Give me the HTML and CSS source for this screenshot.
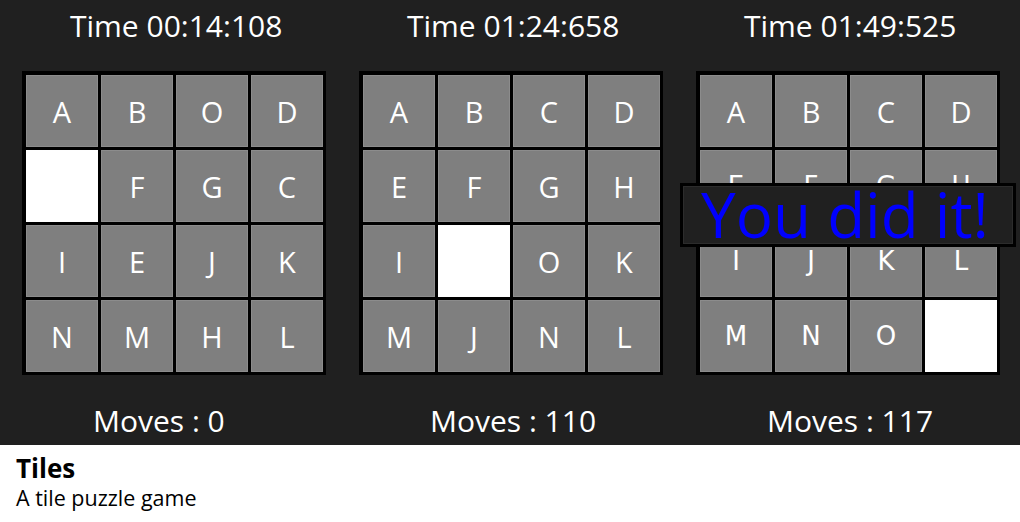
FILE: index.html
```html
<!DOCTYPE html>
<html>
<head>
<meta charset="utf-8">
<link rel="stylesheet" href="styles.css">
</head>
<body>
<main class="stage">
  <section class="game">
    <div class="time">Time 00:14:108</div>
    <div class="board">
      <div class="tile">A</div><div class="tile">B</div><div class="tile">O</div><div class="tile">D</div>
      <div class="tile empty"></div><div class="tile">F</div><div class="tile">G</div><div class="tile">C</div>
      <div class="tile">I</div><div class="tile">E</div><div class="tile">J</div><div class="tile">K</div>
      <div class="tile">N</div><div class="tile">M</div><div class="tile">H</div><div class="tile">L</div>
    </div>
    <div class="moves">Moves : 0</div>
  </section>
  <section class="game">
    <div class="time">Time 01:24:658</div>
    <div class="board">
      <div class="tile">A</div><div class="tile">B</div><div class="tile">C</div><div class="tile">D</div>
      <div class="tile">E</div><div class="tile">F</div><div class="tile">G</div><div class="tile">H</div>
      <div class="tile">I</div><div class="tile empty"></div><div class="tile">O</div><div class="tile">K</div>
      <div class="tile">M</div><div class="tile">J</div><div class="tile">N</div><div class="tile">L</div>
    </div>
    <div class="moves">Moves : 110</div>
  </section>
  <section class="game">
    <div class="time">Time 01:49:525</div>
    <div class="board solved">
      <div class="tile">A</div><div class="tile">B</div><div class="tile">C</div><div class="tile">D</div>
      <div class="tile alt">E</div><div class="tile alt">F</div><div class="tile alt">G</div><div class="tile alt">H</div>
      <div class="tile alt">I</div><div class="tile alt">J</div><div class="tile alt">K</div><div class="tile alt">L</div>
      <div class="tile alt">M</div><div class="tile alt">N</div><div class="tile alt">O</div><div class="tile empty"></div>
      <div class="win">You did it!</div>
    </div>
    <div class="moves">Moves : 117</div>
  </section>
</main>
<footer class="caption">
  <div class="title">Tiles</div>
  <div class="subtitle">A tile puzzle game</div>
</footer>
</body>
</html>
```

FILE: styles.css
```css
html, body {
  margin: 0;
  padding: 0;
  background: #ffffff;
}

body {
  width: 1020px;
  height: 522px;
  overflow: hidden;
}

.stage {
  height: 445px;
  background: #202020;
  display: grid;
  grid-template-columns: 337px 337px 337px;
  padding-left: 5px;
  box-sizing: border-box;
  font-family: "Open Sans", "Noto Sans", sans-serif;
  color: #ffffff;
}

.game {
  display: flex;
  flex-direction: column;
}

.time {
  margin-top: 7px;
  padding-left: 65px;
  font-size: 30px;
  line-height: 38px;
  height: 38px;
  white-space: nowrap;
}

.board {
  position: relative;
  margin: 26px 0 0 17px;
  width: 304px;
  height: 304px;
  box-sizing: border-box;
  padding: 4px 3px 3px 4px;
  background: #000000;
  display: grid;
  grid-template-columns: repeat(4, 72px);
  grid-template-rows: repeat(4, 72px);
  gap: 3px;
}

.tile {
  box-sizing: border-box;
  background: #7f7f7f;
  border: 1px solid #8c8c8c;
  display: flex;
  align-items: center;
  justify-content: center;
  font-size: 29px;
  color: #ffffff;
}

.tile.alt {
  font-family: "DejaVu Sans", sans-serif;
  font-size: 26px;
}

.tile.empty {
  background: #ffffff;
  border-color: #ffffff;
}

.win {
  position: absolute;
  left: -16px;
  top: 112px;
  width: 336px;
  height: 64px;
  box-sizing: border-box;
  border: 3px solid #000000;
  box-shadow: inset 0 0 0 1px #2c2c2c;
  background: #202020;
  color: #0000ff;
  font-size: 62px;
  line-height: 56px;
  text-align: center;
  white-space: nowrap;
  padding-right: 6px;
}

.moves {
  margin-top: 27px;
  padding-left: 88px;
  font-size: 30px;
  line-height: 38px;
  white-space: nowrap;
}

.caption {
  padding: 8px 0 0 16px;
  font-family: "Open Sans", "Noto Sans", sans-serif;
  color: #000000;
}

.title {
  font-size: 26px;
  font-weight: 700;
  line-height: 30px;
}

.subtitle {
  margin-top: 2px;
  font-size: 21.5px;
  line-height: 26px;
}
```
